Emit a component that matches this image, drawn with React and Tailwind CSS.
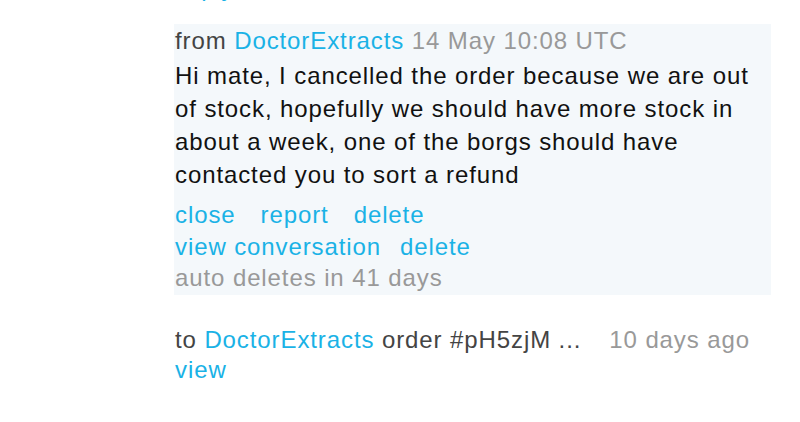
export default function App() {
  const blue = "text-[#1ab2e6]";
  return (
    <div className="w-[800px] h-[422px] overflow-hidden bg-white" style={{ fontFamily: '"Liberation Sans", Arial, sans-serif' }}>
      <div className="pl-[174px] pr-[29px] text-[24px] leading-[33px] tracking-[0.9px]">
        <div className="h-[24px] relative">
          <span className={`absolute left-[4px] -top-[29px] ${blue}`}>reply</span>
        </div>
        <div className="bg-[#f4f8fb] pl-[1px] pb-[1px]">
          <div className="text-[#444]">
            from <span className={blue}>DoctorExtracts</span> <span className="text-[#999]">14 May 10:08 UTC</span>
          </div>
          <div className="text-[#111] pr-[10px] mt-[2px]">
            Hi mate, I cancelled the order because we are out of stock, hopefully we should have more stock in about a week, one of the borgs should have contacted you to sort a refund
          </div>
          <div className={`mt-[8px] leading-[31.5px] ${blue} flex gap-[25px]`}>
            <span>close</span><span>report</span><span>delete</span>
          </div>
          <div className={`leading-[31.5px] ${blue} flex gap-[19px]`}>
            <span>view conversation</span><span>delete</span>
          </div>
          <div className="leading-[31.5px] text-[#999]">auto deletes in 41 days</div>
        </div>
        <div className="pl-[1px] mt-[29px]">
          <div className="text-[#444] leading-[31px]">
            to <span className={blue}>DoctorExtracts</span> order #pH5zjM ...<span className="text-[#999] ml-[28px]">10 days ago</span>
          </div>
          <div className={`leading-[30px] ${blue}`}>view</div>
        </div>
        <div className="pl-[1px] mt-[34px] text-[#999]">order #pH5zJ96 ...</div>
      </div>
    </div>
  );
}
